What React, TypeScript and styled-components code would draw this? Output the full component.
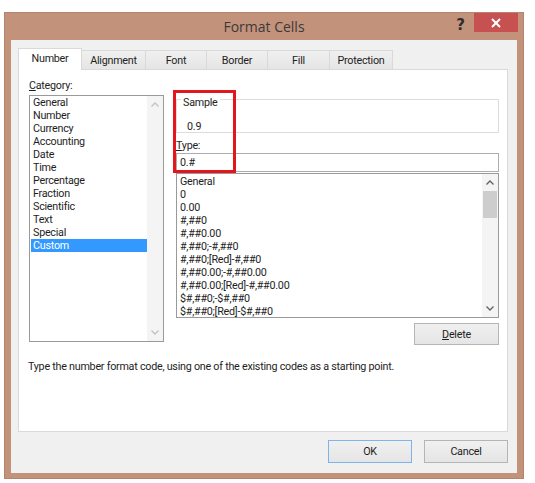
import React from 'react';
import styled, { createGlobalStyle } from 'styled-components';

const GlobalStyle = createGlobalStyle`
  html, body {
    margin: 0;
    padding: 0;
    background: #ffffff;
  }
  body {
    font-family: Roboto, 'Noto Sans', sans-serif;
    font-size: 10.75px;
    letter-spacing: -0.25px;
    color: #1e1e1e;
  }
`;

const Stage = styled.div`
  padding: 12px 0 0 4px;
`;

// Window frame
const Window = styled.div`
  width: 520px;
  height: 467px;
  box-sizing: border-box;
  background: #c3927a;
  border: 1px solid #b4846d;
  padding: 0 6px 5px 6px;
  display: flex;
  flex-direction: column;
`;

const TitleBar = styled.div`
  height: 27px;
  display: grid;
  grid-template-columns: 1fr auto 1fr;
  align-items: start;
`;

const Title = styled.div`
  grid-column: 2;
  font-family: 'Open Sans', sans-serif;
  letter-spacing: 0;
  font-size: 14px;
  line-height: 27px;
  color: #3a3a3a;
`;

const Controls = styled.div`
  grid-column: 3;
  display: flex;
  justify-content: flex-end;
  align-items: flex-start;
  margin-right: -1px;
`;

const HelpButton = styled.span`
  font-family: 'DejaVu Sans', sans-serif;
  font-weight: bold;
  font-size: 15px;
  letter-spacing: 0;
  line-height: 24px;
  color: #2e2e2e;
  margin-right: 9px;
`;

const CloseButton = styled.div`
  width: 44px;
  height: 19px;
  background: #c75050;
  display: flex;
  align-items: center;
  justify-content: center;
`;

const Client = styled.div`
  flex: 1;
  background: #f0f0f0;
  padding: 8px 9px 0 7px;
  display: flex;
  flex-direction: column;
`;

// Tabs
const TabRow = styled.div`
  height: 21px;
  display: flex;
  align-items: flex-end;
`;

const Tab = styled.div<{ $w: number; $active?: boolean }>`
  width: ${({ $w }) => $w}px;
  box-sizing: border-box;
  height: ${({ $active }) => ($active ? 22 : 19)}px;
  margin-bottom: ${({ $active }) => ($active ? -1 : 0)}px;
  margin-right: -1px;
  position: relative;
  z-index: ${({ $active }) => ($active ? 2 : 1)};
  background: ${({ $active }) => ($active ? '#ffffff' : 'linear-gradient(#f0f0f0, #e5e5e5)')};
  border: 1px solid #d9d9d9;
  border-bottom: none;
  display: flex;
  align-items: center;
  justify-content: center;
  padding-bottom: ${({ $active }) => ($active ? 2 : 0)}px;
  color: #1e1e1e;
`;

const Panel = styled.div`
  height: 363px;
  box-sizing: border-box;
  background: #ffffff;
  border: 1px solid #d9d9d9;
  padding: 9px 8px 0 10px;
`;

const Columns = styled.div`
  display: grid;
  grid-template-columns: 135px 323px;
  column-gap: 12px;
  align-items: start;
`;

const Label = styled.div`
  line-height: 13px;
`;

const Key = styled.span`
  text-decoration: underline;
`;

// List boxes
const ListBox = styled.div<{ $h: number }>`
  height: ${({ $h }) => $h}px;
  box-sizing: border-box;
  border: 1px solid #9a9a9a;
  background: #ffffff;
  display: flex;
`;

const CategoryList = styled(ListBox)`
  margin-top: 3px;
`;

const Items = styled.div<{ $pt: number }>`
  flex: 1;
  padding-top: ${({ $pt }) => $pt}px;
  overflow: hidden;
`;

const Item = styled.div<{ $selected?: boolean }>`
  line-height: 13px;
  height: 13px;
  margin-left: 1px;
  padding-left: 2px;
  white-space: nowrap;
  background: ${({ $selected }) => ($selected ? '#3399ff' : 'transparent')};
  color: ${({ $selected }) => ($selected ? '#ffffff' : '#1e1e1e')};
`;

const ScrollBar = styled.div`
  width: 16px;
  background: #f4f4f4;
  display: flex;
  flex-direction: column;
`;

const ArrowBox = styled.div`
  height: 17px;
  display: flex;
  align-items: center;
  justify-content: center;
`;

const Track = styled.div`
  flex: 1;
`;

const Thumb = styled.div`
  height: 27px;
  margin: 0 1px;
  background: #cdcdcd;
`;

const RightColumn = styled.div`
  position: relative;
  display: flex;
  flex-direction: column;
`;

// "Sample" group box: caption sits on the top rule
const GroupBox = styled.div`
  margin-top: 20px;
  height: 34px;
  box-sizing: border-box;
  border: 1px solid #dcdcdc;
  padding: 0 10px;
`;

const GroupCaption = styled.div`
  display: inline-block;
  margin: -4.5px 0 0 -6px;
  padding: 0 2px;
  background: #ffffff;
  line-height: 13px;
  vertical-align: top;
`;

const SampleValue = styled.div`
  margin-top: 7px;
  line-height: 13px;
`;

const TypeLabel = styled(Label)`
  margin-top: 5.5px;
`;

const TextInput = styled.div`
  margin-top: 1.5px;
  height: 19px;
  box-sizing: border-box;
  border: 1px solid #abadb3;
  padding-left: 3px;
  line-height: 17px;
`;

const FormatList = styled(ListBox)`
  margin-top: 1px;
`;

const Highlight = styled.div`
  position: absolute;
  left: -3px;
  top: 11px;
  width: 63px;
  height: 83px;
  box-sizing: border-box;
  border: 3px solid #e4161d;
  pointer-events: none;
`;

const ButtonRow = styled.div<{ $top: number }>`
  display: flex;
  justify-content: flex-end;
  gap: 12px;
  margin-top: ${({ $top }) => $top}px;
`;

const Button = styled.div<{ $w: number; $h: number; $default?: boolean }>`
  width: ${({ $w }) => $w}px;
  height: ${({ $h }) => $h}px;
  box-sizing: border-box;
  border: 1px solid ${({ $default }) => ($default ? '#7eb4ea' : '#b5b5b5')};
  background: linear-gradient(#f0f0f0, #e5e5e5);
  display: flex;
  align-items: center;
  justify-content: center;
  color: #1e1e1e;
`;

const Description = styled.div`
  margin: 15px 0 0 -1px;
  line-height: 13px;
`;

const Chevron: React.FC<{ up?: boolean; color: string }> = ({ up, color }) => (
  <svg width="8" height="5" viewBox="0 0 8 5">
    <polyline
      points={up ? '0.5,4.5 4,1 7.5,4.5' : '0.5,0.5 4,4 7.5,0.5'}
      fill="none"
      stroke={color}
      strokeWidth="1.3"
    />
  </svg>
);

const categories = [
  'General',
  'Number',
  'Currency',
  'Accounting',
  'Date',
  'Time',
  'Percentage',
  'Fraction',
  'Scientific',
  'Text',
  'Special',
  'Custom',
];

const formats = [
  'General',
  '0',
  '0.00',
  '#,##0',
  '#,##0.00',
  '#,##0;-#,##0',
  '#,##0;[Red]-#,##0',
  '#,##0.00;-#,##0.00',
  '#,##0.00;[Red]-#,##0.00',
  '$#,##0;-$#,##0',
  '$#,##0;[Red]-$#,##0',
];

const tabs = [
  { label: 'Number', w: 64 },
  { label: 'Alignment', w: 65 },
  { label: 'Font', w: 62 },
  { label: 'Border', w: 62 },
  { label: 'Fill', w: 63 },
  { label: 'Protection', w: 64 },
];

export default function App() {
  return (
    <>
      <GlobalStyle />
      <Stage>
        <Window>
          <TitleBar>
            <Title>Format Cells</Title>
            <Controls>
              <HelpButton>?</HelpButton>
              <CloseButton>
                <svg width="10" height="10" viewBox="0 0 10 10">
                  <path d="M1 1 L9 9 M9 1 L1 9" stroke="#ffffff" strokeWidth="2" />
                </svg>
              </CloseButton>
            </Controls>
          </TitleBar>

          <Client>
            <TabRow>
              {tabs.map((t, i) => (
                <Tab key={t.label} $w={t.w} $active={i === 0}>
                  {t.label}
                </Tab>
              ))}
            </TabRow>

            <Panel>
              <Columns>
                <div>
                  <Label>
                    <Key>C</Key>ategory:
                  </Label>
                  <CategoryList $h={247}>
                    <Items $pt={0}>
                      {categories.map((c) => (
                        <Item key={c} $selected={c === 'Custom'}>
                          {c}
                        </Item>
                      ))}
                    </Items>
                    <ScrollBar>
                      <ArrowBox>
                        <Chevron up color="#c2c2c2" />
                      </ArrowBox>
                      <Track />
                      <ArrowBox>
                        <Chevron color="#c2c2c2" />
                      </ArrowBox>
                    </ScrollBar>
                  </CategoryList>
                </div>

                <RightColumn>
                  <GroupBox>
                    <GroupCaption>Sample</GroupCaption>
                    <SampleValue>0.9</SampleValue>
                  </GroupBox>
                  <TypeLabel>
                    <Key>T</Key>ype:
                  </TypeLabel>
                  <TextInput>0.#</TextInput>
                  <FormatList $h={145}>
                    <Items $pt={1}>
                      {formats.map((f) => (
                        <Item key={f}>{f}</Item>
                      ))}
                    </Items>
                    <ScrollBar>
                      <ArrowBox>
                        <Chevron up color="#606060" />
                      </ArrowBox>
                      <Thumb />
                      <Track />
                      <ArrowBox>
                        <Chevron color="#606060" />
                      </ArrowBox>
                    </ScrollBar>
                  </FormatList>
                  <ButtonRow $top={5}>
                    <Button $w={85} $h={22}>
                      <Key>D</Key>elete
                    </Button>
                  </ButtonRow>
                  <Highlight />
                </RightColumn>
              </Columns>

              <Description>
                Type the number format code, using one of the existing codes as a starting point.
              </Description>
            </Panel>

            <ButtonRow $top={8}>
              <Button $w={84} $h={23} $default>
                OK
              </Button>
              <Button $w={84} $h={23}>
                Cancel
              </Button>
            </ButtonRow>
          </Client>
        </Window>
      </Stage>
    </>
  );
}
